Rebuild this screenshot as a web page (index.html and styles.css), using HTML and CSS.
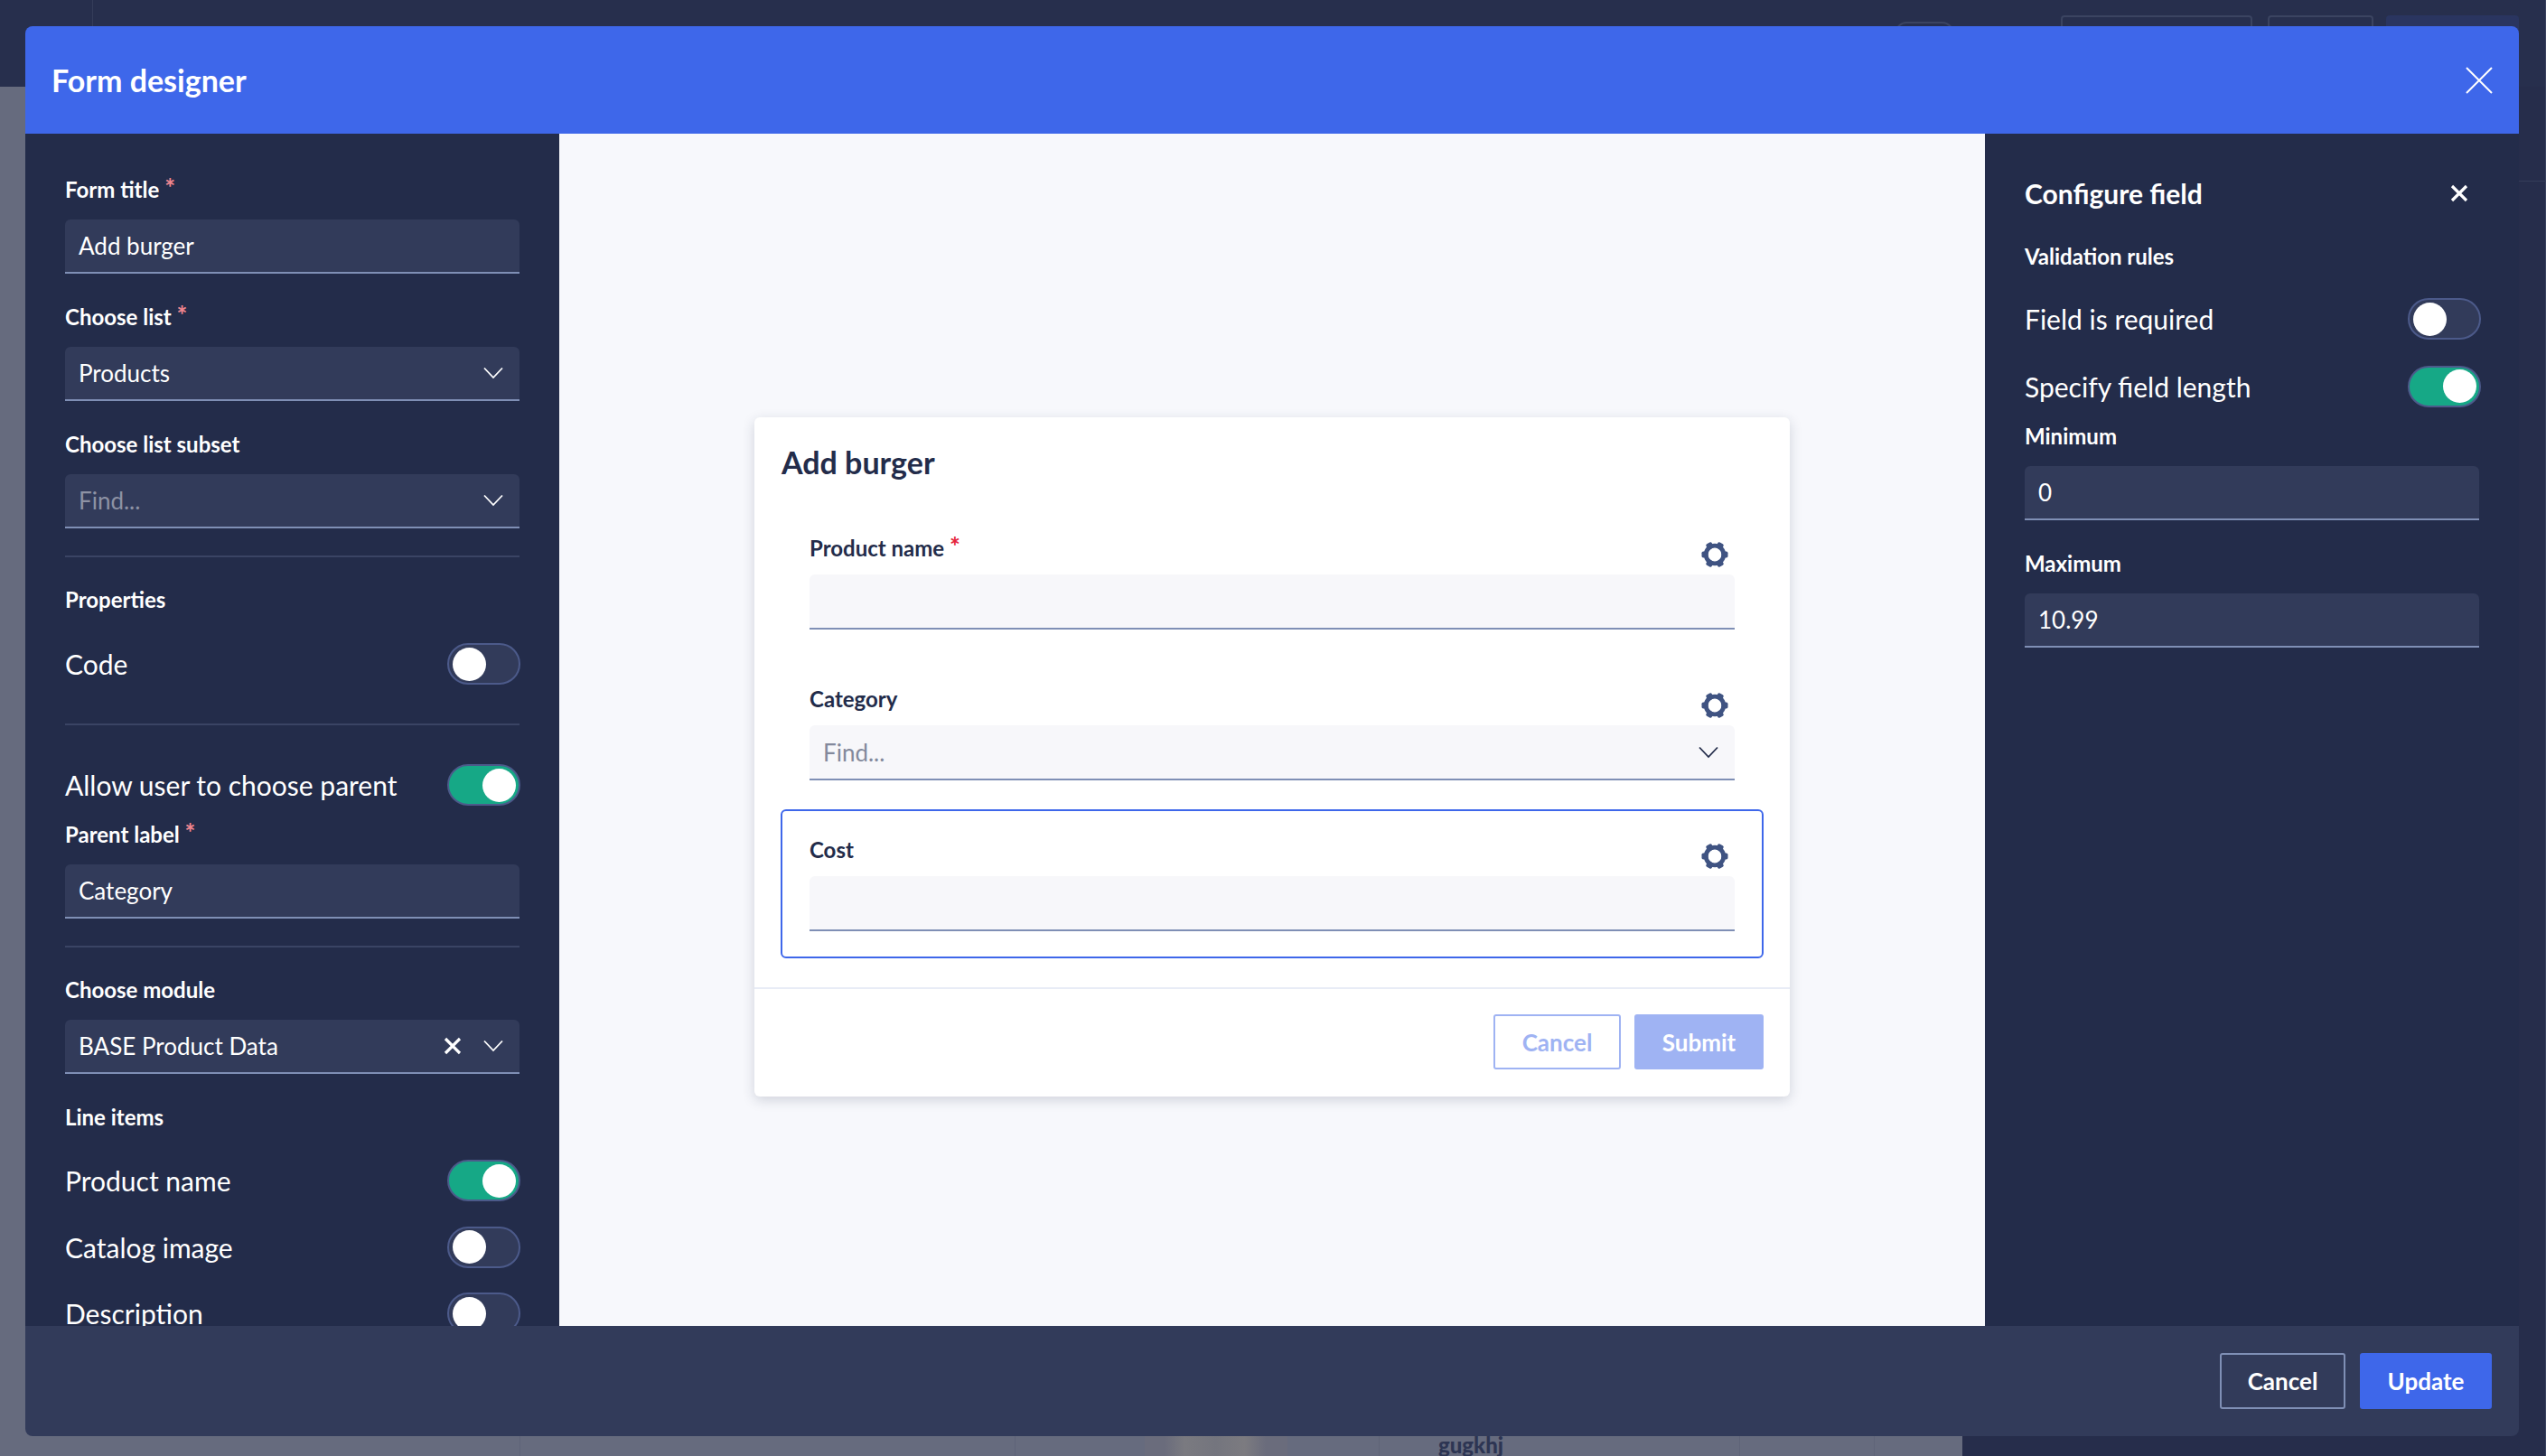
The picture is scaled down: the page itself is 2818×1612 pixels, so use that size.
FILE: index.html
```html
<!DOCTYPE html>
<html lang="en">
<head>
    <meta charset="UTF-8">
    <title>Form designer</title>
    <link rel="stylesheet" href="styles.css">
</head>
<body>
    <svg class="defs" width="0" height="0">
        <symbol id="gear" viewBox="0 0 30 30">
            <circle cx="15" cy="15" r="9.8" fill="none" stroke="currentColor" stroke-width="4.8"/>
            <g fill="currentColor">
                <rect x="0.5" y="11.4" width="7" height="7.2" rx="1.8"/>
                <rect x="22.5" y="11.4" width="7" height="7.2" rx="1.8"/>
                <rect x="0.5" y="11.4" width="7" height="7.2" rx="1.8" transform="rotate(60 15 15)"/>
                <rect x="22.5" y="11.4" width="7" height="7.2" rx="1.8" transform="rotate(60 15 15)"/>
                <rect x="0.5" y="11.4" width="7" height="7.2" rx="1.8" transform="rotate(120 15 15)"/>
                <rect x="22.5" y="11.4" width="7" height="7.2" rx="1.8" transform="rotate(120 15 15)"/>
            </g>
        </symbol>
        <symbol id="chevron" viewBox="0 0 22 14">
            <path d="M1 1.5 L11 12 L21 1.5" fill="none" stroke="currentColor" stroke-width="1.8"/>
        </symbol>
        <symbol id="cross" viewBox="0 0 20 20">
            <path d="M2 2 L18 18 M18 2 L2 18" fill="none" stroke="currentColor" stroke-width="3.2"/>
        </symbol>
    </svg>

    <!-- page behind the dialog -->
    <div class="backdrop">
        <div class="backdrop-top">
            <span class="backdrop-rule"></span>
            <span class="ghost-btn ghost-round"></span>
            <span class="ghost-btn ghost-wide"></span>
            <span class="ghost-btn ghost-mid"></span>
            <span class="ghost-btn ghost-fill"></span>
            <span class="ghost-hline"></span>
        </div>
        <div class="backdrop-main">
            <div class="backdrop-table">
                <div class="ghost-photo"></div>
                <div class="ghost-text">gugkhj</div>
            </div>
        </div>
    </div>

    <div class="modal">
        <header class="modal-header">
            <h1>Form designer</h1>
            <svg class="modal-close" viewBox="0 0 30 30"><path d="M1 1 L29 29 M29 1 L1 29" fill="none" stroke="currentColor" stroke-width="2"/></svg>
        </header>

        <div class="modal-body">
            <aside class="side-left">
                <div class="field">
                    <label class="lbl">Form title <i>*</i></label>
                    <div class="input">Add burger</div>
                </div>
                <div class="field">
                    <label class="lbl">Choose list <i>*</i></label>
                    <div class="input">Products
                        <svg class="chev"><use href="#chevron"/></svg>
                    </div>
                </div>
                <div class="field">
                    <label class="lbl">Choose list subset</label>
                    <div class="input placeholder">Find...
                        <svg class="chev"><use href="#chevron"/></svg>
                    </div>
                </div>
                <hr class="rule rule-a">
                <div class="lbl sec-properties">Properties</div>
                <div class="switch-row row-code">
                    <span>Code</span><span class="toggle"></span>
                </div>
                <hr class="rule rule-b">
                <div class="switch-row row-parent">
                    <span>Allow user to choose parent</span><span class="toggle on"></span>
                </div>
                <div class="field field-parent">
                    <label class="lbl">Parent label <i>*</i></label>
                    <div class="input">Category</div>
                </div>
                <hr class="rule rule-c">
                <div class="field field-module">
                    <label class="lbl">Choose module</label>
                    <div class="input">BASE Product Data
                        <svg class="clear"><use href="#cross"/></svg>
                        <svg class="chev chev-tight"><use href="#chevron"/></svg>
                    </div>
                </div>
                <div class="lbl sec-lines">Line items</div>
                <div class="switch-row row-line">
                    <span>Product name</span><span class="toggle on"></span>
                </div>
                <div class="switch-row row-line">
                    <span>Catalog image</span><span class="toggle"></span>
                </div>
                <div class="switch-row row-line">
                    <span>Description</span><span class="toggle"></span>
                </div>
            </aside>

            <main class="canvas">
                <div class="card">
                    <h2>Add burger</h2>
                    <div class="card-fields">
                        <div class="cfield">
                            <div class="cfield-head">
                                <label class="clbl">Product name <i>*</i></label>
                                <svg class="gear"><use href="#gear"/></svg>
                            </div>
                            <div class="cinput"></div>
                        </div>
                        <div class="cfield">
                            <div class="cfield-head">
                                <label class="clbl">Category</label>
                                <svg class="gear"><use href="#gear"/></svg>
                            </div>
                            <div class="cinput cplaceholder">Find...
                                <svg class="chev"><use href="#chevron"/></svg>
                            </div>
                        </div>
                        <div class="cfield selected">
                            <div class="cfield-head">
                                <label class="clbl">Cost</label>
                                <svg class="gear"><use href="#gear"/></svg>
                            </div>
                            <div class="cinput"></div>
                        </div>
                    </div>
                    <div class="card-foot">
                        <button class="btn btn-ghost">Cancel</button>
                        <button class="btn btn-pale">Submit</button>
                    </div>
                </div>
            </main>

            <aside class="side-right">
                <div class="config-head">
                    <h3>Configure field</h3>
                    <svg class="config-close"><use href="#cross"/></svg>
                </div>
                <div class="lbl">Validation rules</div>
                <div class="switch-row row-required">
                    <span>Field is required</span><span class="toggle"></span>
                </div>
                <div class="switch-row row-length">
                    <span>Specify field length</span><span class="toggle on"></span>
                </div>
                <div class="field field-min">
                    <label class="lbl">Minimum</label>
                    <div class="input">0</div>
                </div>
                <div class="field">
                    <label class="lbl">Maximum</label>
                    <div class="input">10.99</div>
                </div>
            </aside>
        </div>

        <footer class="modal-footer">
            <button class="btn btn-outline">Cancel</button>
            <button class="btn btn-primary">Update</button>
        </footer>
    </div>
</body>
</html>
```

FILE: styles.css
```css
* {
    box-sizing: border-box;
}
html, body {
    margin: 0;
    height: 1612px;
    overflow: hidden;
}
body {
    font-family: "Lato", "Noto Sans", Arial, sans-serif;
    background: #262d4b;
    color: #fff;
    position: relative;
}
.defs {
    position: absolute;
}

/* backdrop */
.backdrop {
    height: 1612px;
    display: flex;
    flex-direction: column;
    border-right: 1px solid #3a425f;
}
.backdrop-top {
    height: 96px;
    position: relative;
    background: #272f4d;
}
.backdrop-rule {
    position: absolute;
    left: 102px;
    top: 0;
    width: 1px;
    height: 96px;
    background: #353d5a;
}
.ghost-hline {
    position: absolute;
    left: 2788px;
    top: 200px;
    width: 30px;
    height: 1px;
    background: #353d5a;
}
.ghost-btn {
    position: absolute;
    height: 40px;
    border: 2px solid #3b4461;
    border-radius: 4px;
}
.ghost-round {
    left: 2098px;
    top: 24px;
    width: 64px;
    border-radius: 12px;
}
.ghost-wide {
    left: 2281px;
    top: 17px;
    width: 212px;
}
.ghost-mid {
    left: 2510px;
    top: 17px;
    width: 117px;
}
.ghost-fill {
    left: 2641px;
    top: 17px;
    width: 147px;
    background: #2a3560;
    border: none;
}
.backdrop-main {
    flex: 1;
    width: 2172px;
    background: #666b7e;
}
.backdrop-table {
    height: 100%;
    position: relative;
    background:
        linear-gradient(#5f6478, #5f6478) 575px 0 / 1px 100% no-repeat,
        linear-gradient(#5f6478, #5f6478) 1123px 0 / 1px 100% no-repeat,
        linear-gradient(#5f6478, #5f6478) 1526px 0 / 1px 100% no-repeat,
        linear-gradient(#5f6478, #5f6478) 1925px 0 / 1px 100% no-repeat,
        linear-gradient(#5f6478, #5f6478) 2074px 0 / 1px 100% no-repeat;
}
.ghost-photo {
    position: absolute;
    left: 1267px;
    bottom: 0;
    width: 158px;
    height: 24px;
    background: linear-gradient(90deg, #6a6c7c 0, #6a6c7c 14%, #7a7a80 28%, #74757e 50%, #7c7b80 70%, #6a6c7c 85%);
}
.ghost-text {
    position: absolute;
    left: 1592px;
    bottom: 0;
    font-size: 24px;
    line-height: 24px;
    font-weight: 900;
    color: #2d3553;
}

/* dialog */
.modal {
    position: absolute;
    left: 28px;
    top: 29px;
    width: 2760px;
    height: 1561px;
    display: flex;
    flex-direction: column;
    border-radius: 8px;
    overflow: hidden;
}
.modal-header {
    height: 119px;
    flex: none;
    display: flex;
    align-items: center;
    justify-content: space-between;
    padding: 0 29px;
    background: #3e67ea;
}
.modal-header h1 {
    margin: 0;
    font-size: 34px;
    font-weight: 700;
}
.modal-close {
    width: 30px;
    height: 30px;
}
.modal-body {
    flex: 1;
    min-height: 0;
    display: flex;
}
.modal-footer {
    height: 122px;
    flex: none;
    display: flex;
    align-items: center;
    justify-content: flex-end;
    gap: 16px;
    padding: 0 30px;
    background: #323b5a;
}

/* side panels */
.side-left {
    width: 591px;
    flex: none;
    padding: 46px 44px 0;
    background: #232c4a;
    overflow: hidden;
}
.side-right {
    width: 591px;
    flex: none;
    padding: 0 44px;
    background: #232c4a;
}
.lbl {
    display: block;
    height: 32px;
    line-height: 32px;
    font-size: 24px;
    font-weight: 700;
}
.lbl i,
.clbl i {
    font-style: normal;
    font-size: 28px;
    line-height: 0;
    color: #f0868f;
    position: relative;
    top: -1px;
}
.clbl i {
    color: #e5253c;
}
.field {
    margin-bottom: 32px;
}
.input {
    height: 60px;
    margin-top: 17px;
    padding: 0 15px;
    display: flex;
    align-items: center;
    font-size: 26px;
    background: #323b5a;
    border-bottom: 2px solid #7f8fb5;
    border-radius: 6px 6px 0 0;
}
.placeholder {
    color: #8d92a4;
}
.chev {
    width: 22px;
    height: 14px;
    margin-left: auto;
    color: #fff;
    flex: none;
    margin-right: 3px;
}
.clear {
    width: 20px;
    height: 20px;
    margin-left: auto;
    flex: none;
}
.chev-tight {
    margin-left: 24px;
}
.rule {
    margin: 0;
    border: none;
    height: 2px;
    background: #3a4464;
}
.rule-a {
    margin-top: -2px;
}
.sec-properties {
    margin-top: 31px;
}
.switch-row {
    display: flex;
    align-items: center;
    justify-content: space-between;
    height: 46px;
    font-size: 30px;
    margin-right: -1px;
}
.row-code {
    margin-top: 32px;
}
.rule-b {
    margin-top: 43px;
}
.row-parent {
    margin-top: 43px;
}
.field-parent {
    margin-top: 16px;
    margin-bottom: 0;
}
.rule-c {
    margin-top: 30px;
}
.field-module {
    margin-top: 31px;
    margin-bottom: 0;
}
.sec-lines {
    margin-top: 32px;
}
.row-line {
    margin-top: 27.5px;
}
.sec-lines + .row-line {
    margin-top: 31px;
}

/* switch */
.toggle {
    width: 81px;
    height: 46px;
    flex: none;
    display: flex;
    align-items: center;
    padding: 0 3.5px;
    border: 2px solid #4c5a8a;
    border-radius: 23px;
    background: #323b5a;
}
.toggle::before {
    content: "";
    width: 37px;
    height: 37px;
    border-radius: 50%;
    background: #fff;
}
.toggle.on {
    justify-content: flex-end;
    background: #16a886;
}

/* form preview */
.canvas {
    flex: 1;
    min-width: 0;
    display: flex;
    justify-content: center;
    align-items: center;
    padding-top: 60px;
    background: #f7f8fc;
}
.card {
    width: 1146px;
    height: 752px;
    background: #fff;
    border-radius: 6px;
    box-shadow: 0 4px 14px rgba(35, 44, 74, 0.18);
    color: #232c4a;
}
.card h2 {
    margin: 0;
    padding: 30px 30px 0;
    height: 90px;
    line-height: 40px;
    font-size: 34px;
    font-weight: 700;
}
.card-fields {
    padding: 0 29px;
}
.cfield {
    padding: 37px 30px 0;
    height: 167px;
    border: 2px solid transparent;
    border-radius: 6px;
}
.selected {
    margin-top: 10px;
    height: 165px;
    padding-top: 27px;
    border-color: #3e67ea;
}
.cfield-head {
    display: flex;
    justify-content: space-between;
    height: 45px;
}
.clbl {
    font-size: 24px;
    line-height: 32px;
    font-weight: 700;
    color: #232c4a;
}
.gear {
    width: 30px;
    height: 30px;
    margin: 8px 7px 0 0;
    color: #3f5382;
    flex: none;
}
.cinput {
    height: 61px;
    padding: 0 15px;
    display: flex;
    align-items: center;
    font-size: 26px;
    background: #f7f7fa;
    border-bottom: 2px solid #7f8fb5;
    border-radius: 6px 6px 0 0;
}
.cplaceholder {
    color: #83899c;
}
.cplaceholder .chev {
    color: #232c4a;
}
.card-foot {
    margin-top: 32px;
    padding: 28px 29px 0;
    border-top: 2px solid #e8ecf6;
    display: flex;
    justify-content: flex-end;
    gap: 15px;
}
.btn {
    height: 61px;
    padding: 0 28px;
    font-family: inherit;
    font-size: 26px;
    font-weight: 700;
    border-radius: 3px;
    background: none;
    border: 2px solid transparent;
}
.btn-ghost {
    width: 141px;
    color: #9fb3f3;
    border-color: #9fb3f3;
}
.btn-pale {
    width: 143px;
    color: #fff;
    background: #9fb3f3;
}
.btn-outline {
    width: 139px;
    height: 62px;
    color: #fff;
    border-color: #7f8fb5;
}
.btn-primary {
    width: 146px;
    height: 62px;
    color: #fff;
    background: #3e67ea;
}

/* configure field */
.config-head {
    height: 120px;
    padding-top: 12px;
    display: flex;
    align-items: center;
    justify-content: space-between;
}
.config-head h3 {
    margin: 0;
    font-size: 30px;
    font-weight: 700;
}
.config-close {
    width: 20px;
    height: 20px;
    margin-right: 12px;
}
.side-right .switch-row {
    margin-right: -2px;
}
.row-required {
    margin-top: 30px;
}
.row-length {
    margin-top: 28.5px;
}
.field-min {
    margin-top: 16.5px;
}
```
